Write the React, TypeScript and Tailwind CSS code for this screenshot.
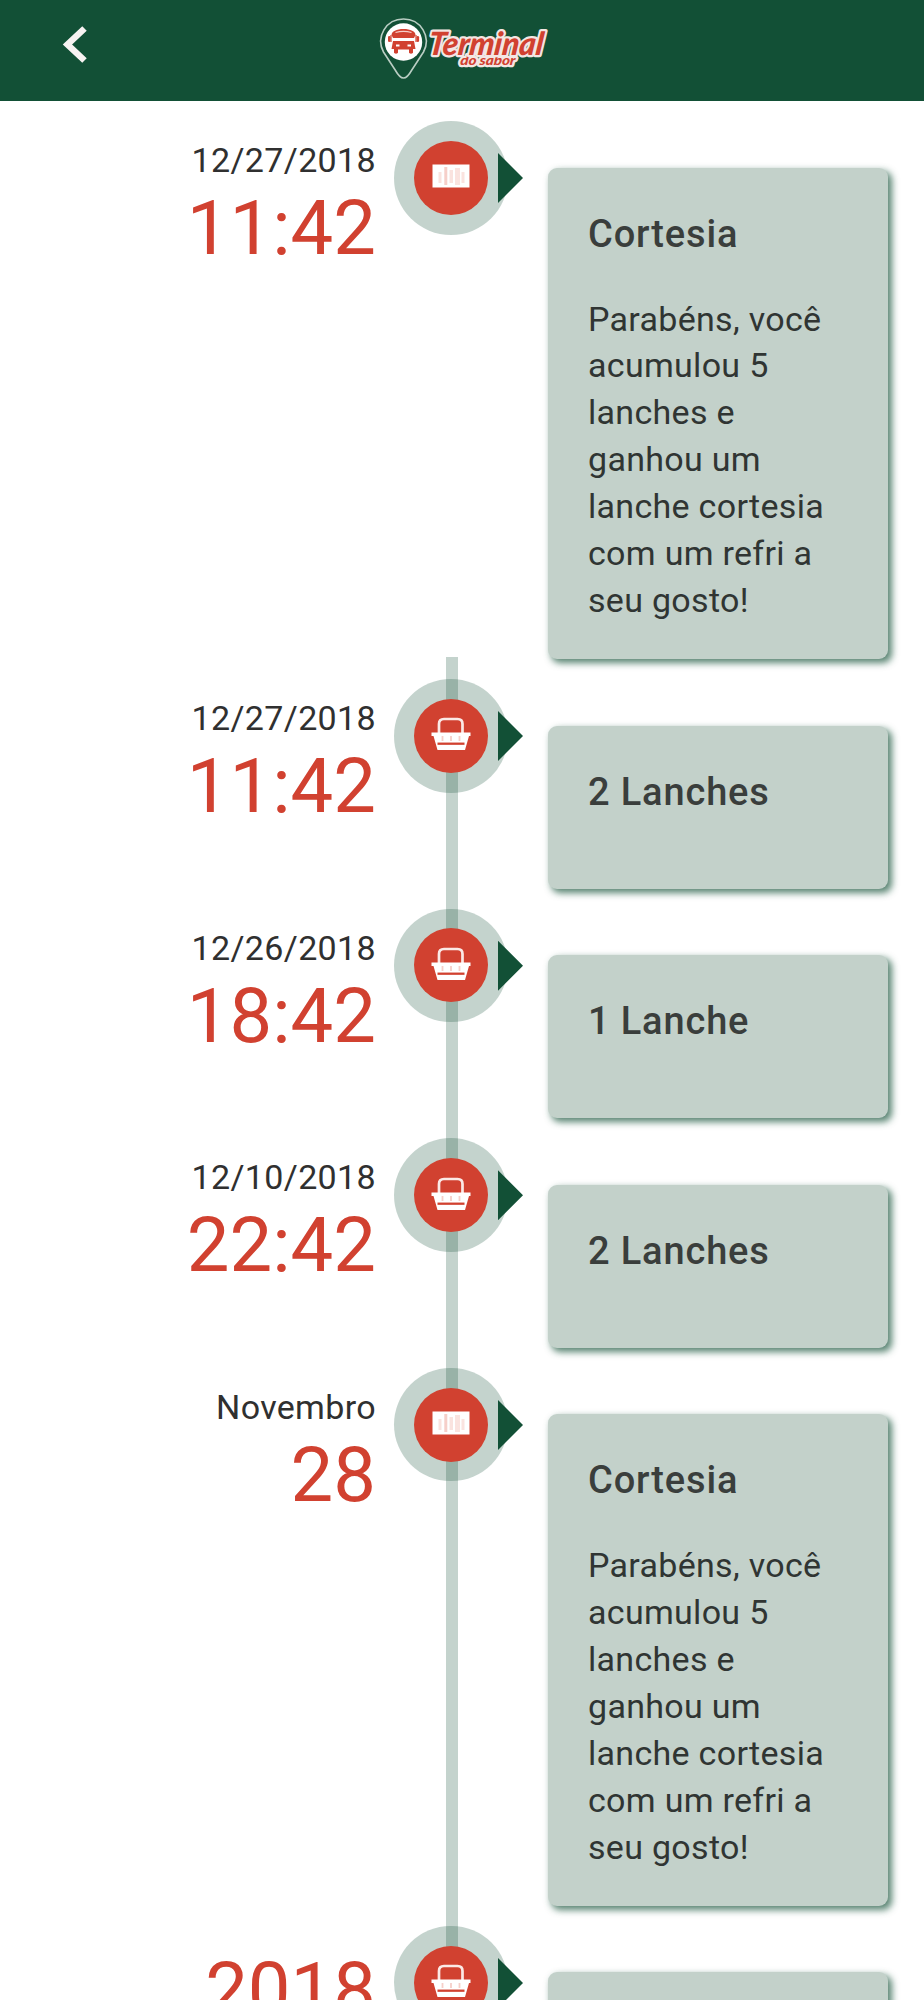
type EntryType = {
  date?: string;
  time: string;
  kind: "coupon" | "basket";
  title: string;
  text?: string;
};

const courtesyText =
  "Parabéns, você\nacumulou 5\nlanches e\nganhou um\nlanche cortesia\ncom um refri a\nseu gosto!";

const entries: EntryType[] = [
  { date: "12/27/2018", time: "11:42", kind: "coupon", title: "Cortesia", text: courtesyText },
  { date: "12/27/2018", time: "11:42", kind: "basket", title: "2 Lanches" },
  { date: "12/26/2018", time: "18:42", kind: "basket", title: "1 Lanche" },
  { date: "12/10/2018", time: "22:42", kind: "basket", title: "2 Lanches" },
  { date: "Novembro", time: "28", kind: "coupon", title: "Cortesia", text: courtesyText },
  { time: "2018", kind: "basket", title: "" },
];

const Logo = () => (
  <svg className="ml-[376px] shrink-0" width="174" height="101" viewBox="376 0 174 101">
    <path
      d="M403.500 78c-3.500 0-5.500-3-8-7.500l-12-18.500c-8-15 2.500-33 20-33s28 18 20 33l-12 18.500c-2.500 4.500-4.500 7.500-8 7.500z"
      fill="none"
      stroke="#b9cdc3"
      strokeWidth="1.600"
    />
    <circle cx="403.500" cy="42" r="18.700" fill="#fff" />
    <g fill="#d14130">
      <path d="M391.500 35c0-3.500 5-6 12-6s12 2.500 12 6l-1.500 3h-21z" />
      <path d="M393 41h21l1.500 8h-2.500v3.500c0 1.500-4 1.500-4 0v-3h-11v3c0 1.500-4 1.500-4 0v-3.500h-2.500z" />
      <rect x="388" y="36" width="2.600" height="6" rx="1.300" />
      <rect x="416.500" y="36" width="2.600" height="6" rx="1.300" />
    </g>
    <path d="M395.500 32.500c5-1.500 11-1.500 16 0" fill="none" stroke="#f6cfc9" strokeWidth="1.200" />
    <path d="M391 35v7M416 35v7" stroke="#d14130" strokeWidth="1.200" />
    <path d="M396 45.500h3.500M407.500 45.500h3.500" stroke="#fff" strokeWidth="2" />
    <g
      fontFamily="Lato, sans-serif"
      fontStyle="italic"
      fontWeight="900"
      fill="#d14130"
      stroke="#f3e6e3"
      strokeLinejoin="round"
      style={{ paintOrder: "stroke" }}
    >
      <g transform="translate(460 65) skewX(-6)">
        <text fontSize="13.500" strokeWidth="4.500" textLength="55" lengthAdjust="spacingAndGlyphs">
          do sabor
        </text>
      </g>
      <g transform="translate(427.500 54.500) skewX(-7)">
        <text fontSize="32" strokeWidth="4.500" textLength="115" lengthAdjust="spacingAndGlyphs">
          Terminal
        </text>
      </g>
    </g>
  </svg>
);

const BasketIcon = () => (
  <svg className="-mt-[3px]" width="40" height="34" viewBox="0 0 40 34">
    <path d="M8 17V7c0-3.500 2-5 5-5h13.500c3 0 5 1.500 5 5v10" fill="none" stroke="#fbe9e6" strokeWidth="2.700" />
    <path d="M.5 15.500h39v3.500h-1.500l-4 14h-27.500l-4-14h-2z" fill="#fff" />
    <path d="M11.500 19v5M20 19v5M28.500 19v5" stroke="#f6cfc9" strokeWidth="1.800" />
    <path d="M6.500 26.700h27" stroke="#d14130" strokeWidth="2.300" />
  </svg>
);

const CouponIcon = () => (
  <svg className="-mt-[3px]" width="38" height="24" viewBox="0 0 38 24">
    <rect x=".5" y=".5" width="37" height="23" fill="#fff" />
    <g fill="#fae3df">
      <rect x="6.500" y="8" width="3" height="11" />
      <rect x="12.300" y="3" width="3" height="18" fill="#f6cfc9" />
      <rect x="17.500" y="6" width="3.500" height="13" />
      <rect x="23" y="4" width="5" height="17" />
      <rect x="29.500" y="8" width="3" height="11" />
    </g>
  </svg>
);

const Marker = ({ kind, line }: { kind: EntryType["kind"]; line: boolean }) => (
  <div className="relative ml-[18px] w-[154px] shrink-0">
    {line && <div className="absolute inset-y-0 left-[52px] w-[12.300px] bg-[#125036]/25" />}
    <div className="relative mt-[22px] flex size-[113.500px] items-center justify-center rounded-full bg-[#125036]/25">
      <div className="flex size-[74px] items-center justify-center rounded-full bg-[#d14130]">
        {kind === "basket" ? <BasketIcon /> : <CouponIcon />}
      </div>
      <div className="absolute top-[32px] left-[104px] h-[50px] w-[25px] bg-[#125036] [clip-path:polygon(0_0,100%_50%,0_100%)]" />
    </div>
  </div>
);

const Entry = ({ entry, line }: { entry: EntryType; line: boolean }) => (
  <li className={entry.text ? "flex h-[558px]" : "flex h-[229.670px]"}>
    <div className="w-[376px] shrink-0 pt-[40px] text-right">
      {entry.date && (
        <p className="text-[34px] leading-[43px] tracking-[0.350px] text-[#303030]">{entry.date}</p>
      )}
      <p className="text-[76px] leading-[92px] text-[#d14130]">{entry.time}</p>
    </div>
    <Marker kind={entry.kind} line={line} />
    <div className="mt-[68.500px] -mb-[2px] w-[339.500px] rounded-[9px] bg-[#c3d1ca] px-[40px] pt-[38px] shadow-[3.500px_3.500px_7px_rgba(18,80,54,0.700)]">
      <h4 className="text-[38px] leading-[56px] font-medium tracking-[0.850px] text-[#3a3e3c]">{entry.title}</h4>
      {entry.text && (
        <p className="mt-[34px] text-[34px] leading-[46.900px] tracking-[0.300px] whitespace-pre text-[#303533]">
          {entry.text}
        </p>
      )}
    </div>
  </li>
);

const App = () => {
  return (
    <div className="h-[2000px] overflow-hidden bg-white font-['Roboto',sans-serif]">
      <header className="flex h-[101px] items-start bg-[#125036]">
        <div className="flex h-[101px] w-0">
          <svg className="mt-[22px] ml-[61px] shrink-0" width="30" height="44" viewBox="0 0 30 44">
            <path d="M23.500 6.500L6.500 22.500l17 16" fill="none" stroke="#f7f3f2" strokeWidth="6.500" />
          </svg>
        </div>
        <Logo />
      </header>
      <ul className="-mt-[2px]">
        {entries.map((entry, i) => (
          <Entry key={i} entry={entry} line={i > 0} />
        ))}
      </ul>
    </div>
  );
};

export default App;
